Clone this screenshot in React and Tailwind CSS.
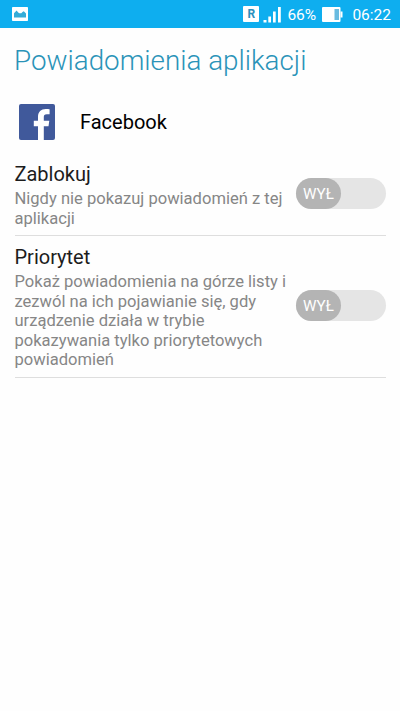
import React from 'react';

const settings = [
  {
    title: 'Zablokuj',
    lines: ['Nigdy nie pokazuj powiadomień z tej', 'aplikacji'],
  },
  {
    title: 'Priorytet',
    lines: [
      'Pokaż powiadomienia na górze listy i',
      'zezwól na ich pojawianie się, gdy',
      'urządzenie działa w trybie',
      'pokazywania tylko priorytetowych',
      'powiadomień',
    ],
  },
];

const StatusBar = () => (
  <div className="flex h-7 items-center justify-between bg-[#0eaeef] pl-3 pr-[9px] text-white">
    <svg className="h-[14px] w-4" viewBox="0 0 16 14">
      <rect width="16" height="14" rx="0.8" fill="#fff" />
      <path d="M2 10.5V6.2L3.2 5L4.6 3.6L6.2 5.4L7.4 6.3L9.3 6.3L10.5 5L11.8 4.2L14 6.5V10.5Z" fill="#35acd8" />
    </svg>

    <div className="flex items-center">
      {/* Roaming */}
      <span className="flex h-4 w-4 items-center justify-center rounded-[1px] bg-white text-[12px] font-bold leading-none text-[#2b8fbd]">
        R
      </span>
      {/* Signal */}
      <svg className="ml-1 mt-px h-4 w-[19px]" viewBox="0 0 19 16" fill="#fff">
        <rect x="0.5" y="13" width="3" height="2.5" />
        <rect x="5.3" y="9.5" width="2.7" height="6" />
        <rect x="10" y="4.5" width="2.7" height="11" />
        <rect x="15" y="0" width="2.8" height="15.5" />
      </svg>
      <span className="ml-[5px] mt-px w-[30px] whitespace-nowrap text-[15.5px] leading-7">66%</span>
      {/* Battery */}
      <svg className="ml-[5px] h-[15px] w-[21px]" viewBox="0 0 21 15">
        <rect width="18.5" height="15" rx="1" fill="#fff" />
        <rect x="18.5" y="4.5" width="2" height="6" fill="#fff" />
        <rect x="12.5" y="2" width="4.5" height="11" fill="#69bbe0" />
      </svg>
      <span className="ml-[9px] mt-px text-[15.5px] leading-7">06:22</span>
    </div>
  </div>
);

const Toggle = () => (
  <button className="mb-[3px] flex h-[31px] w-[90px] shrink-0 rounded-full bg-[#e5e5e5]">
    <span className="flex h-[31px] w-[45px] items-center justify-center rounded-full bg-[#b4b4b4] pt-px text-[15.2px] text-white">
      WYŁ
    </span>
  </button>
);

const SettingRow = ({ title, lines }) => (
  <div className="flex items-center justify-between border-b border-[#dedede] pt-[9px] pb-[7px]">
    <div>
      <h2 className="text-[20px] leading-6 text-[#1c1c1c]">{title}</h2>
      <p className="mt-[3px] whitespace-nowrap text-[16.56px] leading-[19.5px] text-[#868686]">
        {lines.map((line) => (
          <span key={line} className="block">{line}</span>
        ))}
      </p>
    </div>
    <Toggle />
  </div>
);

const App = () => (
  <div className="min-h-screen w-[400px] bg-[#fefefe] font-['Roboto','Liberation_Sans',sans-serif]">
    <StatusBar />
    <header className="flex h-[63px] items-center px-[14px] pt-0.5">
      <h1 className="whitespace-nowrap text-[27.8px] font-light text-[#2a93b8]">Powiadomienia aplikacji</h1>
    </header>

    <main className="pl-[14.5px] pr-[14px]">
      <div className="mb-px flex h-[61px] items-center pl-[4.5px]">
        <svg className="h-9 w-9" viewBox="0 0 36 36">
          <rect width="36" height="36" rx="2" fill="#40599b" />
          <path
            d="M19 36V22.2H14.8V16.8H19V12.8C19 8 22 5 26.8 5C28.6 5 30 5.1 30.6 5.3V10.2H27.8C25.4 10.2 24.8 11.4 24.8 13.2V16.8H30.3L29.5 22.2H24.8V36Z"
            fill="#fff"
          />
        </svg>
        <span className="ml-[25px] text-[20px] text-black">Facebook</span>
      </div>
      {settings.map((setting) => (
        <SettingRow key={setting.title} {...setting} />
      ))}
    </main>
  </div>
);

export default App;
